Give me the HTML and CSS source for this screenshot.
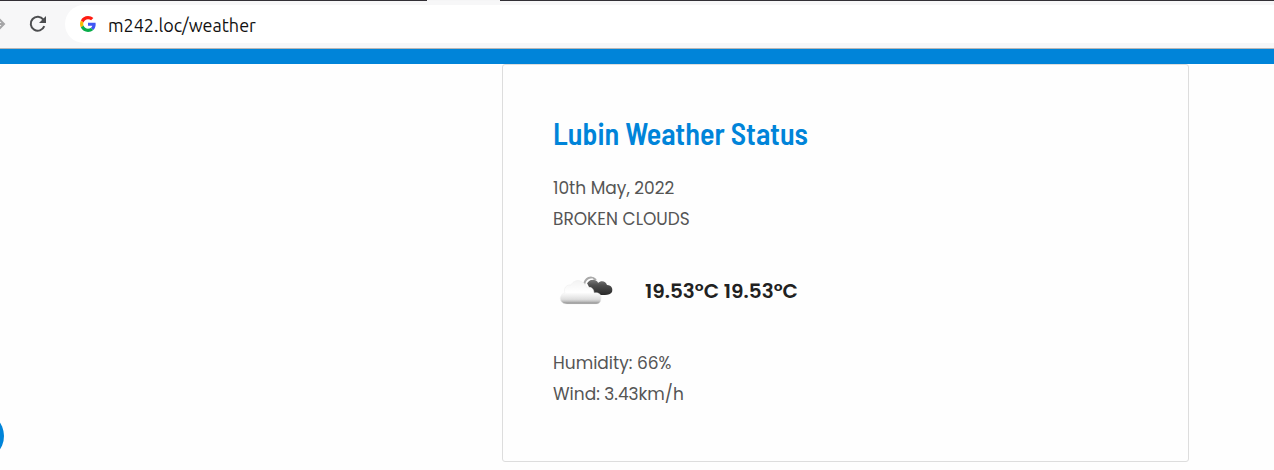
FILE: index.html
```
<!DOCTYPE html>
<html lang="en">
<head>
<meta charset="utf-8">
<title>Lubin Weather Status</title>
<link rel="stylesheet" href="styles.css">
</head>
<body>
<header class="browser">
  <div class="tabstrip"><span class="tab"></span></div>
  <div class="toolbar">
    <button class="tool forward" aria-label="Forward"><svg width="16" height="16" viewBox="0 0 16 16"><path d="M1 8h13M8 2l6 6-6 6" fill="none" stroke="#a5a5a7" stroke-width="2"/></svg></button>
    <button class="tool reload" aria-label="Reload"><svg width="18" height="18" viewBox="0 0 18 18"><path d="M15.3 11.2A7 7 0 1 1 14.4 4.6" fill="none" stroke="#4d4e50" stroke-width="2"/><path d="M17 1v7h-7z" fill="#4d4e50"/></svg></button>
    <div class="omnibox">
      <svg width="16" height="16" viewBox="0 0 48 48" aria-hidden="true"><path fill="#ff1c12" d="M24 9.500c3.500 0 6.700 1.200 9.200 3.600l6.900-6.900C35.900 2.400 30.500 0 24 0 14.600 0 6.500 5.400 2.600 13.200l8 6.200C12.400 13.700 17.700 9.500 24 9.500z"/><path fill="#4056f4" d="M47 24.600c0-1.600-.2-3.100-.4-4.600H24v9h12.900c-.6 3-2.300 5.500-4.800 7.200l7.700 6C44.400 38 47 32 47 24.600z"/><path fill="#fbbc05" d="M10.500 28.600c-.5-1.500-.8-3-.8-4.600s.3-3.100.8-4.600l-8-6.200C.9 16.500 0 20.100 0 24s.9 7.500 2.600 10.800z"/><path fill="#08ad4a" d="M24 48c6.500 0 11.900-2.100 15.900-5.800l-7.700-6c-2.200 1.500-4.900 2.300-8.200 2.300-6.300 0-11.600-4.200-13.500-9.900l-8 6.200C6.500 42.600 14.600 48 24 48z"/></svg>
      <input class="address" type="text" value="m242.loc/weather" aria-label="Address" spellcheck="false">
    </div>
  </div>
</header>
<div class="banner"></div>
<main class="page">
  <article class="card">
    <h1 class="title">Lubin Weather Status</h1>
    <p class="line">10th May, 2022</p>
    <p class="line">BROKEN CLOUDS</p>
    <div class="current">
      <svg class="clouds" width="68" height="50" viewBox="0 0 68 50" role="img" aria-label="Broken clouds">
        <defs>
          <linearGradient id="light" x1="0" y1="0" x2="0" y2="1"><stop offset="0" stop-color="#f3f3f3"/><stop offset=".5" stop-color="#fff"/><stop offset=".8" stop-color="#dedede"/><stop offset=".88" stop-color="#c4c4c4"/><stop offset="1" stop-color="#858585"/></linearGradient>
          <linearGradient id="dark" x1="0" y1="0" x2="0" y2="1"><stop offset="0" stop-color="#7b7b7b"/><stop offset=".35" stop-color="#505050"/><stop offset="1" stop-color="#292929"/></linearGradient>
        </defs>
        <path fill="url(#dark)" d="M34 17C36 14 39 13 42 14C44 15 45 16 45 17C48 14 53 15 54 19C59 19 60 23 59 26C58 28 55 29 52 29H40z"/>
        <path fill="none" stroke="#a9a9a9" stroke-width="2" d="M31 19C32 12 38 9 43 14"/>
        <path fill="none" stroke="#fff" stroke-width="1" d="M33 19C34 15 37 13 40 13"/>
        <path fill="url(#light)" stroke="#ececec" stroke-width=".5" d="M14 38C8 38 6 33 8 30C9 28 10 27 12 27C10 22 14 18 18 19C20 15 25 13 29 16C32 17 33 20 34 22C38 20 41 23 41 27C46 26 49 29 48 33C48 36 46 38 43 38z"/>
      </svg>
      <strong class="temps">19.53°C 19.53°C</strong>
    </div>
    <p class="line">Humidity: 66%</p>
    <p class="line">Wind: 3.43km/h</p>
  </article>
</main>
<button class="bubble" aria-label="Open menu"></button>
</body>
</html>
```
FILE: styles.css
```
* { box-sizing: border-box; }
body {
  margin: 0;
  background: #fefefe;
  color: #555;
  font-family: Poppins, Inter, sans-serif;
  overflow-x: hidden;
}
.browser { border-bottom: 1px solid #b6b6b6; }
.tabstrip {
  display: flex;
  height: 1px;
  padding-left: 427px;
  background: #322f35;
}
.tab { width: 73px; background: #f5f5f6; }
.toolbar {
  display: flex;
  align-items: center;
  height: 47px;
  padding-bottom: 1px;
  background: #f7f7f8;
}
.tool {
  display: flex;
  flex: none;
  padding: 0;
  border: 0;
  background: none;
}
.forward { margin-left: -10px; }
.reload { margin: 0 18px 0 23px; }
.omnibox {
  display: flex;
  flex: 1;
  align-items: center;
  gap: 12px;
  height: 38px;
  padding-left: 15px;
  border-radius: 19px 0 0 19px;
  background: #fff;
}
.address {
  flex: 1;
  padding: 1px 0 0;
  border: 0;
  outline: 0;
  background: none;
  color: #111;
  font: 18px Ubuntu, "Noto Sans", sans-serif;
}
.banner { height: 15px; background: #0084d9; }
.page {
  display: grid;
  grid-template-columns: 502fr 687fr;
  padding: 0 85px 8px 0;
}
.card {
  grid-column: 2;
  padding: 50px 50px 51px;
  border: 1px solid #ddd;
  border-radius: 3px;
}
.title {
  margin: 0 0 22px;
  color: #0084d9;
  font: 600 30px/36px "Barlow Semi Condensed", "Barlow Condensed", Roboto, sans-serif;
}
.line {
  margin: 0;
  font-size: 17px;
  line-height: 31px;
}
.current {
  display: flex;
  align-items: center;
  gap: 24px;
  height: 113px;
  padding-bottom: 2px;
}
.temps { color: #212121; font-size: 20px; font-weight: 600; }
.bubble {
  position: fixed;
  left: -46px;
  bottom: 9px;
  width: 50px;
  height: 50px;
  padding: 0;
  border: 0;
  border-radius: 50%;
  background: #0084d9;
}
```
